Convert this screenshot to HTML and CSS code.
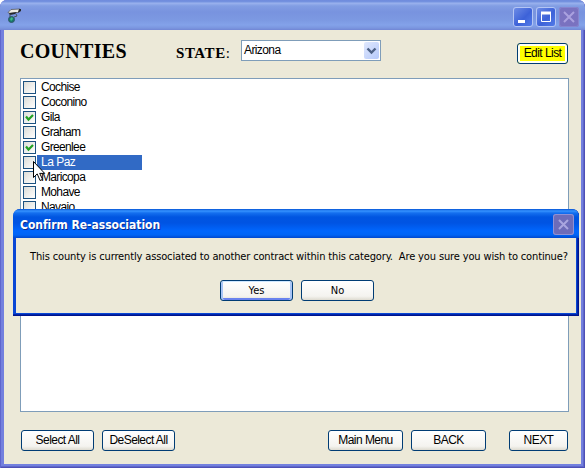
FILE: index.html
```html
<!DOCTYPE html>
<html lang="en">
<head>
<meta charset="utf-8">
<title>Counties</title>
<link rel="stylesheet" href="styles.css">
</head>
<body>
<main class="window">
  <header class="titlebar">
    <svg class="app-icon" width="16" height="16" viewBox="0 0 16 16">
      <path d="M1 4.500 4 1.500l9-.5-2 3.500-8 1z" fill="#eeece4" stroke="#55585c" stroke-width=".8"/>
      <path d="M12 1h2v2l-3 2zM2 5l8-1-2 2-5 1z" fill="#25282b"/>
      <path d="M3 6v3M9 6l1 2-3 1" fill="none" stroke="#4b5259"/>
      <circle cx="4.500" cy="11.500" r="3" fill="#16776c" stroke="#305669"/>
      <path d="M3 11l2-2 1 2-2 2z" fill="#42bd80"/>
    </svg>
    <div class="controls">
      <span class="control"><svg width="20" height="20"><path d="M5 14.500h7" stroke="#fff" stroke-width="3"/></svg></span>
      <span class="control"><svg width="20" height="20"><path d="M5.500 5.500h9v9h-9z" fill="none" stroke="#fff"/><path d="M5 6h10" stroke="#fff" stroke-width="3"/></svg></span>
      <span class="control disabled"><svg width="20" height="20"><path d="M5 5l10 10M15 5L5 15" stroke="#aaa1df" stroke-width="2"/></svg></span>
    </div>
  </header>
  <section class="client">
    <div class="heading">
      <h1>COUNTIES</h1>
      <label class="state">STATE<i>:</i></label>
      <div class="select"><span>Arizona</span><b class="arrow"><svg width="15" height="17"><path d="M3.500 6.500l4 4 4-4" fill="none" stroke="#4d6185" stroke-width="2.400"/></svg></b></div>
      <button class="edit">Edit List</button>
    </div>
    <div class="list">
      <div class="row"><i class="box"></i><span>Cochise</span></div>
      <div class="row"><i class="box"></i><span>Coconino</span></div>
      <div class="row"><i class="box"><svg width="11" height="11"><path d="M2 4.500l2.500 3L9 3" fill="none" stroke="#21a121" stroke-width="2.200"/></svg></i><span>Gila</span></div>
      <div class="row"><i class="box"></i><span>Graham</span></div>
      <div class="row"><i class="box"><svg width="11" height="11"><path d="M2 4.500l2.500 3L9 3" fill="none" stroke="#21a121" stroke-width="2.200"/></svg></i><span>Greenlee</span></div>
      <div class="row"><i class="box"></i><span class="selected">La Paz</span></div>
      <div class="row"><i class="box"></i><span>Maricopa</span></div>
      <div class="row"><i class="box"></i><span>Mohave</span></div>
      <div class="row"><i class="box"></i><span>Navajo</span></div>
    </div>
    <footer class="actions">
      <button class="select-all">Select All</button>
      <button class="deselect">DeSelect All</button>
      <button class="menu">Main Menu</button>
      <button class="back">BACK</button>
      <button class="next">NEXT</button>
    </footer>
  </section>
</main>
<svg class="cursor" width="13" height="21" viewBox="0 0 13 21"><path d="M.5.5v16l3.700-3.600 2.900 6.600 2.500-1.100-2.900-6h5z" fill="#fff" stroke="#000"/></svg>
<section class="dialog">
  <header class="dialog-title"><span>Confirm Re-association</span><b class="dialog-close"><svg width="19" height="19"><path d="M5 5l9 9M14 5l-9 9" stroke="#a9a5df" stroke-width="2"/></svg></b></header>
  <div class="dialog-body">
    <p>This county is currently associated to another contract within this category.&nbsp; Are you sure you wish to continue?</p>
    <div class="answers"><button class="yes">Yes</button><button>No</button></div>
  </div>
</section>
</body>
</html>
```
FILE: styles.css
```css
* { box-sizing: border-box; }
body {
  margin: 0;
  background: #fff;
  font: 12px/15px "Liberation Sans", sans-serif;
  color: #000;
  overflow: hidden;
}
svg { display: block; }
.window {
  width: 585px;
  height: 468px;
  padding: 0 4px 4px;
  background: #7380de;
  border-radius: 7px 7px 0 0;
  box-shadow: inset 1px 0 #5f66cd, inset -1px -1px #4e50b5, inset -2px -2px #5f68ca;
}
.titlebar {
  display: flex;
  align-items: center;
  justify-content: space-between;
  height: 30px;
  margin: 0 -4px;
  padding: 3px 6px 0 7px;
  border-radius: 7px 7px 0 0;
  background: linear-gradient(#6f8bdd 0, #7593e0 2px, #9bb3ee 3px, #819de3 6px, #7893df 12px, #7c99e2 20px, #83a2e9 25px, #7b96df 28px, #7186d4 30px);
}
.app-icon { margin-bottom: 1px; }
.controls { display: flex; gap: 3px; }
.control {
  width: 20px;
  height: 20px;
  border-radius: 3px;
  background: linear-gradient(135deg, #7290e7, #3d62d8 55%, #557eea);
  box-shadow: inset 0 0 0 1px #b4c5f4;
}
.control.disabled { background: #7a72c0; box-shadow: inset 0 0 0 1px #8785ce; }
.client { height: 434px; padding: 0 12px 0 16px; background: #ece9d8; }
.heading { display: flex; height: 48px; align-items: flex-start; }
h1 {
  width: 156px;
  margin: 10px 0 0;
  font: bold 20px/23px "Liberation Serif", serif;
  letter-spacing: .3px;
}
.state {
  width: 65px;
  margin-top: 15px;
  font: bold 15px/17px "Liberation Serif", serif;
  letter-spacing: .55px;
}
.state i { font-style: normal; font-weight: normal; }
.select {
  display: flex;
  width: 140px;
  height: 21px;
  margin-top: 10px;
  padding: 1px 1px 1px 2px;
  justify-content: space-between;
  border: 1px solid #7f9db9;
  background: #fff;
  line-height: 17px;
  letter-spacing: -.6px;
}
.arrow { width: 15px; height: 17px; border-radius: 2px; background: linear-gradient(135deg, #e0e8fd, #b5c9fa); }
button {
  height: 21px;
  padding: 0;
  border: 1px solid #003c74;
  border-radius: 3px;
  background: linear-gradient(#fff, #f4f3ef 80%, #dedbd0);
  color: #000;
  font: 12px/19px "Liberation Sans", sans-serif;
  letter-spacing: -.55px;
  white-space: nowrap;
}
.edit { width: 51px; margin: 13px 0 0 136px; background: #ff0; box-shadow: inset 0 0 0 2px #fffff4; }
.list { width: 549px; height: 334px; padding: 1px 2px; border: 1px solid #7f9db9; background: #fff; }
.row { display: flex; height: 15px; letter-spacing: -.65px; }
.row span { width: 105px; margin-left: 1px; padding-left: 4px; line-height: 15px; }
.row .selected { background: #316ac5; color: #fff; letter-spacing: -.5px; }
.box { width: 13px; height: 13px; margin-top: 1px; border: 1px solid #1c5180; background: linear-gradient(135deg, #dcdcd7, #fff); }
.actions { display: flex; padding: 18px 0 0 1px; }
.select-all, .deselect { width: 73px; }
.deselect { margin-left: 8px; }
.menu { width: 75px; margin-left: 153px; }
.back { width: 75px; margin-left: 8px; }
.next { width: 59px; margin-left: 23px; }
.cursor { position: absolute; left: 33px; top: 161px; }
.dialog {
  position: absolute;
  left: 13px;
  top: 209px;
  width: 566px;
  height: 107px;
  padding: 0 3px 3px;
  border-radius: 7px 7px 0 0;
  background: #0846d5;
  box-shadow: inset -1px -1px #00138c, inset -2px -2px #0025a8;
}
.dialog-title {
  display: flex;
  height: 29px;
  margin: 0 -3px;
  padding: 5px 5px 0 7px;
  justify-content: space-between;
  border-radius: 7px 7px 0 0;
  background: linear-gradient(#0553d5 0, #3593ff 2px, #146fef 4px, #0055e1 8px, #0054e3 14px, #0066fd 22px, #0064f5 26px, #0047cd 29px);
  color: #fff;
  font: bold 12px/23px "DejaVu Sans Condensed", sans-serif;
  letter-spacing: -.03px;
  text-shadow: 1px 1px #0b2d90;
}
.dialog-close { width: 21px; height: 21px; padding: 1px; border-radius: 3px; background: #6d6cb9; box-shadow: inset 0 0 0 1px #8f91d4; }
.dialog-body { height: 75px; padding: 11px 14px 0; background: #ece9d8; }
.dialog p { margin: 0; font: 11px/15px "DejaVu Sans Condensed", sans-serif; letter-spacing: -.14px; white-space: nowrap; }
.answers { display: flex; justify-content: center; gap: 8px; margin: 16px 0 0 2px; }
.answers button { width: 73px; font: 11px/19px "DejaVu Sans Condensed", sans-serif; letter-spacing: 0; }
.yes { box-shadow: inset 0 1px #cee7ff, inset 2px 0 #a9c5f5, inset -2px 0 #a9c5f5, inset 0 -2px #6982ee; }
```
